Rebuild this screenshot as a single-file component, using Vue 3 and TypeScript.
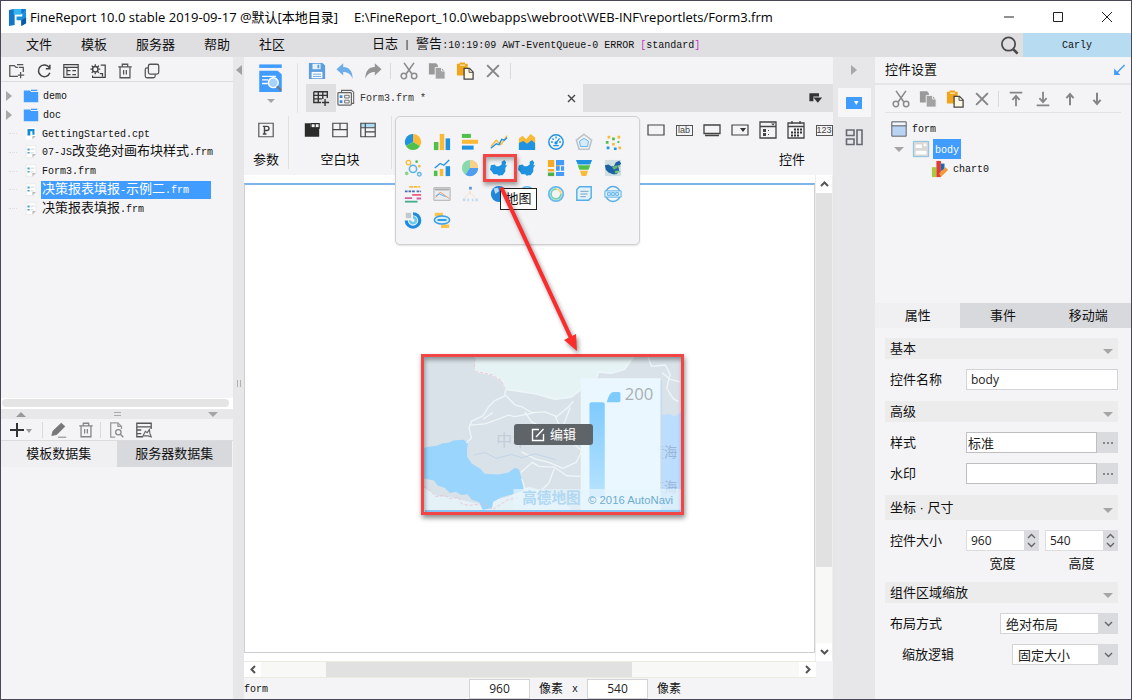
<script setup lang="ts">
import { h, ref } from 'vue'

const icons: Record<string, string> = {
  folderAdd: '<path d="M11 16H2V4h5l2 2h2M10 3h7M12 6h5v5M14 11v7M11 14.500h7" fill="none" stroke="#555" stroke-width="1.400"/>',
  refresh: '<path d="M16 6.500A6.500 6.500 0 1 0 16.500 12M16.500 3v4.500H12" fill="none" stroke="#444" stroke-width="1.700"/>',
  treeView: '<path d="M2 3h16v14H2zM2 6h16M5.500 6v9M5.500 9.500h4M5.500 14h4M11.500 9.500h4M11.500 14h4" fill="none" stroke="#444" stroke-width="1.300"/>',
  gearDoc: '<circle cx="7" cy="8" r="3" fill="none" stroke="#444" stroke-width="1.600"/><path d="M7 2.500v2M7 11.500v2M1.500 8h2M10.500 8h2M3 4l1.500 1.500M11 4L9.500 5.500M3 12l1.500-1.500M11 12l-1.500-1.500M13 3.500h5V17H4v-2M12 13h3v3" fill="none" stroke="#444" stroke-width="1.400"/>',
  trash: '<path d="M2.500 5.500h15M7 5V2.500h6V5M4.500 6v11.500h11V6M8.500 9v5M11.500 9v5" fill="none" stroke="#555" stroke-width="1.400"/>',
  copyLines: '<rect x="6" y="2.500" width="11.500" height="11" rx="2" fill="none" stroke="#555" stroke-width="1.400"/><path d="M6 6.500H4.500a2 2 0 0 0-2 2v7a2 2 0 0 0 2 2h7a2 2 0 0 0 2-2v-2" fill="none" stroke="#555" stroke-width="1.400"/>',
  save: '<path d="M1 1h15l3 3v15H1z" fill="#5b9fdf"/><path d="M5 2h9v6H5z" fill="#e8f2fc"/><path d="M10.500 3h2v4h-2z" fill="#5b9fdf"/><path d="M4 11h12v7H4z" fill="#fff"/><path d="M5.500 13.500h9M5.500 16h9" stroke="#5b9fdf"/>',
  undo: '<path d="M.5 8L8 1.500V5.500c7 0 10.500 5 10.500 13-2-5-5-7.500-10.500-7.500v4z" fill="#6eaee8"/>',
  redo: '<path d="M19.500 8L12 1.500V5.500C5 5.500 1.500 10.500 1.500 18.500c2-5 5-7.500 10.500-7.500v4z" fill="#949494"/>',
  cut: '<path d="M4.500 1l8.500 12M15.500 1L7 13" stroke="#8c8c8c" stroke-width="1.800"/><circle cx="4.300" cy="15.500" r="3" fill="none" stroke="#8c8c8c" stroke-width="1.700"/><circle cx="15.700" cy="15.500" r="3" fill="none" stroke="#8c8c8c" stroke-width="1.700"/>',
  copy: '<path d="M1 1.500h8l2 2V14H1z" fill="#999"/><path d="M8 6h7l4 4v9H8z" fill="#a2a2a2" stroke="#f4f4f6"/><path d="M15 6v4h4" fill="none" stroke="#f4f4f6"/>',
  paste: '<path d="M1 2h3V.5h6V2h3v13H1z" fill="#f0a51c"/><path d="M4.500 3.500h5.500" stroke="#fff"/><path d="M9 7h6l4 4v8H9z" fill="#fff8e4" stroke="#444" stroke-width="1.400"/><path d="M14.500 7v4.500H19" fill="none" stroke="#444"/>',
  close: '<path d="M3.500 3.500l13 13M16.500 3.500l-13 13" stroke="#858585" stroke-width="2.200"/>',
  toTop: '<path d="M3 3h14M10 18V7M6 11l4-4.500 4 4.500" fill="none" stroke="#858585" stroke-width="2"/>',
  toBottom: '<path d="M3 17h14M10 2v11M6 9l4 4.500L14 9" fill="none" stroke="#858585" stroke-width="2"/>',
  up: '<path d="M10 17V4.500M6 9l4-4.500L14 9" fill="none" stroke="#858585" stroke-width="2.200"/>',
  down: '<path d="M10 3v12.500M6 11l4 4.500 4-4.500" fill="none" stroke="#858585" stroke-width="2.200"/>',
  search: '<circle cx="9" cy="8.500" r="7" fill="none" stroke="#4a4a4a" stroke-width="1.800"/><path d="M13.500 13.500l5 5" stroke="#4a4a4a" stroke-width="2.800"/>',
  param: '<path d="M2 2.500h16v15H2z" fill="none" stroke="#555" stroke-width="1.300"/><path d="M6.500 6H11a2.300 2.300 0 0 1 0 4.600H8.500M8.300 6v8.500M6.500 14.500h4" fill="none" stroke="#444" stroke-width="1.600"/>',
  tabBlock: '<path d="M2 2.500h6.500v4.500H18v10.500H2z" fill="#2b2b2b"/><path d="M9 3h9v5H9z" fill="none" stroke="#2b2b2b" stroke-width="1.300"/><path d="M13.500 3v4" stroke="#2b2b2b" stroke-width="1.300"/>',
  absBlock: '<path d="M2 2.500h16v15H2zM2 9.500h16M10 3v6.500" fill="none" stroke="#444" stroke-width="1.300"/>',
  report: '<path d="M2 3h16v4H2z" fill="#aadcf5"/><path d="M2 2.500h16v15H2zM2 7.500h16M7 3v14M7 12h11" fill="none" stroke="#444" stroke-width="1.300"/>',
  gridAdd: '<path d="M2 3h15v7M2 3v12h8M2 7h15M2 11h9M7 3v12M12 3v8M14.500 11v8M11 15h8" fill="none" stroke="#333" stroke-width="1.500"/>',
  formTab: '<path d="M5 4V1.500h11l2.500 2V16H16" fill="none" stroke="#666" stroke-width="1.200"/><rect x="1" y="4" width="15" height="14" rx="1" fill="#f4f4f6" stroke="#666" stroke-width="1.300"/><path d="M3 7h3v3H3zM3 12.500h3v3H3z" fill="#3b8ad0"/><path d="M8.500 7h5v3h-5zM8.500 12.500h5v3h-5z" fill="none" stroke="#666"/>',
  corner: '<path d="M3 4h12v4H8v6H3z" fill="#333"/><path d="M8 9.500h11L13.500 16z" fill="#333"/>',
  button: '<path d="M2 5h16v10H2z" fill="none" stroke="#444" stroke-width="1.200"/>',
  buttonGroup: '<path d="M2 5h16v8.500H2zM3 15.500h14" fill="none" stroke="#444" stroke-width="1.300"/>',
  combo: '<path d="M2 5h16v10H2z" fill="none" stroke="#444" stroke-width="1.200"/><path d="M10 8h6l-3 4z" fill="#333"/>',
  check: '<path d="M2 2h16v16H2zM2 6.500h16" fill="none" stroke="#444" stroke-width="1.300"/><path d="M5 9h3v3H5zM5 13h3v3H5zM13 3.500h4l-2 2zM10 10h1v1h-1zM10 14h1v1h-1z" fill="#444"/>',
  calendar: '<path d="M2 3h16v15H2zM2 6.500h16M6 1v3M14 1v3" fill="none" stroke="#444" stroke-width="1.300"/><path d="M8 9.500h8M5 12.500h11M5 15.500h8" stroke="#333" stroke-width="2" stroke-dasharray="2 1"/>',
  comboStrip: '<path d="M2 4h16v12H2z" fill="#409cff"/><path d="M10 8h4.500l-2.250 4z" fill="#fff"/>',
  layout: '<path d="M2.500 3h7.500v5.500H2.500zM2.500 12h7.500v5.500H2.500zM13 3h5v14.500h-5z" fill="none" stroke="#666972" stroke-width="1.600"/>',
  pencil: '<path d="M2 16l1.500-5 9-8.500 4 3.500-9 9zM9 18h9" fill="#777" stroke="#777"/>',
  searchDoc: '<path d="M8 18H3V2h8l4 4v3M11 2v4h4" fill="none" stroke="#999" stroke-width="1.400"/><circle cx="11.500" cy="12.500" r="3" fill="none" stroke="#888" stroke-width="1.400"/><path d="M14 15l3 3" stroke="#888" stroke-width="1.500"/>',
  tableEdit: '<path d="M9 17.500H2v-15h16V9M2 6.500h16M7 10H2M7 14H2" fill="none" stroke="#555" stroke-width="1.400"/><path d="M9 16.500l2.500-5 2 1.500 2.500-3.500.5 4 1.500 4-3.500-1z" fill="none" stroke="#666" stroke-width="1.300"/>',
  pin: '<path d="M18 3L6 15" stroke="#409cff" stroke-width="2"/><path d="M3 8v9h9z" fill="#409cff"/>',
  logo: '<path d="M1 2l5-1h13l-3 5H7v12l-6 1z" fill="#1476c8"/><path d="M6 1h8v6H6z" fill="#35b5f2"/><path d="M9 9h6V6l4-5v15l-5 3v-6H9z" fill="#1c92df"/><path d="M14 13l5-3v6l-5 3z" fill="#0b5aa6"/>',
  folder: '<path d="M2 4h7l1 1.500h8V17H2z" fill="#409cff"/><path d="M10 3h7v1.500h-7z" fill="#409cff"/>',
  cpt: '<path d="M3 1h14v12l-4 5H3z" fill="#fff"/><path d="M5 3h10v8h-3V6H9v6H5z" fill="#168bd2"/><path d="M17 13h-5v5z" fill="#bbb"/>',
  frm: '<path d="M3 1h14v12l-4 5H3z" fill="#fff" stroke="#e5e5e8"/><path d="M5 5h3v3H5zM5 10h3v2H5z" fill="#4b9fcc"/><path d="M9 5h6v2H9zM9 10h5v2H9z" fill="#e3e3e3"/><path d="M17 13h-5v5z" fill="#bbb"/>',
  formNode: '<path d="M2 2h16v16H2z" fill="#b9d3f3" stroke="#555"/><path d="M3 3h14v3H3z" fill="#f5f5f5"/><path d="M2 6.500h16" stroke="#555"/>',
  bodyNode: '<path d="M1.500 1.500h17v17h-17z" fill="#d8d8d8" stroke="#7fbde0"/><path d="M4 5h7v4H4zM13 4h3v3h-3zM4 12h12v4H4z" fill="#fff"/>',
  chartNode: '<path d="M1 8h5v11H1z" fill="#a9c93f"/><path d="M6 1h5v18H6z" fill="#e03c36"/><path d="M11 4h4v8h-4z" fill="#1c68b0"/><path d="M9 15l7-7 3 3-8 8z" fill="#f29a3c"/>',
  preview: '<path d="M4 2h32v5H4z" fill="#409cff"/><path d="M4 11h26l6 5v25H4z" fill="#409cff"/><path d="M8 19h20M8 24h9M8 29h8" stroke="#fff" stroke-width="2"/><circle cx="24" cy="28" r="7" fill="#a8d2fb" stroke="#fff" stroke-width="2"/><path d="M29 33l6 6" stroke="#777" stroke-width="3"/>',
}

const china = 'M1 7l4-1 2 2 3 0 3-2 0-3 3-2 2 3-1 3 2 0-2 3 0 4-3 4-3 0-1 1-2-2-4 0-2-3-2-2z'
const charts: string[] = [
  '<path d="M10 10V1a9 9 0 0 0-7.800 13.500z" fill="#1f93df"/><path d="M10 10V1a9 9 0 0 1 7.800 13.500z" fill="#fbb938"/><path d="M10 10l7.800 4.500a9 9 0 0 1-15.600 0z" fill="#51c04b"/>',
  '<path d="M1 10h5v9H1z" fill="#51c04b"/><path d="M7.500 1h5v18h-5z" fill="#fbb938"/><path d="M14 6h5v13h-5z" fill="#1f93df"/>',
  '<path d="M1 1h10v4.500H1z" fill="#51c04b"/><path d="M1 7.500h18V12H1z" fill="#fbb938"/><path d="M1 14h13v4.500H1z" fill="#1f93df"/>',
  '<path d="M1 15l6-7 5 5 7-10" fill="none" stroke="#fbb938" stroke-width="1.500"/><path d="M1 17l6-5 3 1 3-6 3 1 3-3" fill="none" stroke="#1f93df" stroke-width="1.500"/>',
  '<path d="M1 6l4-3 4 4 5-6 5 4v14H1z" fill="#fbb938"/><path d="M1 11l5-2 4 3 5-4 4 3v8H1z" fill="#1f93df"/>',
  '<circle cx="10" cy="10" r="8" fill="none" stroke="#1f93df" stroke-width="1.600"/><path d="M4.500 10h2M13.500 10h2M10 4v2M6 6l1.500 1.500M14 6l-4 5M7 14h6" stroke="#1f93df" stroke-width="1.500"/><circle cx="10" cy="11" r="1.800" fill="#1f93df"/>',
  '<path d="M10 1.500l8.500 6.300L15.500 18h-11L1.500 7.800z" fill="none" stroke="#bfc5ca" stroke-width="1.800"/><path d="M10 6l5 3-1 6H6L5 9z" fill="#d6ebf8" stroke="#59b2e6"/>',
  '<path d="M4 3h3v3H4zM15 3h3v3h-3zM9 11h3v3H9zM16 15h3v3h-3z" fill="#fbb938"/><path d="M9 5h3v3H9zM2 9h3v3H2zM15 9h2v2h-2z" fill="#51c04b"/><path d="M3 15h3v3H3zM11 16h3v3h-3z" fill="#1f93df"/>',
  '<circle cx="5" cy="4" r="2.500" fill="none" stroke="#fbb938" stroke-width="1.500"/><circle cx="10" cy="11" r="4" fill="none" stroke="#5ab4ea" stroke-width="1.800"/><circle cx="17" cy="17" r="2" fill="none" stroke="#5ab4ea" stroke-width="1.500"/><circle cx="14" cy="3" r="1.500" fill="#51c04b"/><circle cx="3" cy="16" r="2" fill="#8bd286"/><circle cx="17" cy="8" r="1.500" fill="#fbb938"/>',
  '<path d="M1 13h4v6H1z" fill="#51c04b"/><path d="M7.500 11h4v8h-4z" fill="#fbb938"/><path d="M14 8h5v11h-5z" fill="#1f93df"/><path d="M2 10l6-5 4 2 6-6" fill="none" stroke="#1f93df" stroke-width="1.500"/>',
  '<circle cx="10" cy="10" r="9" fill="#8ad9ae"/><path d="M10 10V1a9 9 0 0 1 9 9z" fill="#fad08a"/><path d="M10 10h9a9 9 0 0 1-14 7.500z" fill="#4f9cf0"/>',
  `<path d="${china}" fill="#1f93df"/>`,
  `<path d="${china}" fill="#1f93df"/>`,
  '<path d="M1 1h7v8H1zM1 11h7v3H1zM10 7h4v5h-4z" fill="#f5ab24"/><path d="M1 15h7v4H1z" fill="#51b04b"/><path d="M10 1h9v6h-9zM10 8h4v5h-4zM15.500 8H19v5h-3.500zM10 14.500h9V19h-9z" fill="#409cff"/>',
  '<path d="M1 1h18l-2 5H3z" fill="#1f93df"/><path d="M3 7h14l-2 5H5z" fill="#51c04b"/><path d="M5.500 13h9l-2 6h-5z" fill="#fbb938"/>',
  '<path d="M1 1h18v18H1z" fill="#d0dfe2"/><path d="M1 7l4-1 3 2 3 0 2-4 4-2 2 3-3 4 1 4-3 4-4 0-5-2-3-3z" fill="#1b5fa5"/><path d="M9 9l5-2 1 3-4 2zM12 13h3v3h-3z" fill="#62b86c"/><path d="M15 8h3M14 14h4" stroke="#8fc6a0" stroke-width="2"/>',
  '<path d="M6 2h12" stroke="#fbb938" stroke-width="2" stroke-dasharray="4 1"/><path d="M1 7h11M14 7h5" stroke="#476dab" stroke-width="2" stroke-dasharray="3 1"/><path d="M9 11h10" stroke="#ed6284" stroke-width="2"/><path d="M1 14.500h8M14 15h5" stroke="#d35ea0" stroke-width="2"/><path d="M1 18.500h14" stroke="#48aa8d" stroke-width="2"/>',
  '<path d="M1 3h18v14H1z" fill="#e9edf0" stroke="#aaa"/><path d="M2 5h16" stroke="#aaa" stroke-width="2"/><path d="M3 14l5-6 10 7" fill="none" stroke="#ed8f60"/><path d="M3 12l4-2 7 3" fill="none" stroke="#55afea"/>',
  '<path d="M10 4v5M10 9l-6 5M10 9l6 5" fill="none" stroke="#f3d9ae" stroke-dasharray="2 1"/><path d="M9 2h3v3H9z" fill="#5b95d8"/><path d="M2 15h3v3H2zM7 15h2v3H7zM12 15h2v3h-2zM16 15h3v3h-3z" fill="#c5dcf0"/>',
  '<circle cx="10" cy="10" r="9" fill="#1f86dc"/><path d="M4 4l5-1 1 4-4 3zM12 7l5 1-2 6-3-2z" fill="#b9dcf6"/>',
  '<circle cx="10" cy="10" r="8" fill="none" stroke="#63b5e9" stroke-width="1.800"/>',
  '<circle cx="10" cy="10" r="8" fill="none" stroke="#65b9ec" stroke-width="2"/><path d="M10 4.500A5.500 5.500 0 1 0 15.500 10" fill="none" stroke="#74d3b2" stroke-width="2"/><path d="M10 4.500a5.500 5.500 0 0 1 5.500 5.500" fill="none" stroke="#f8d67c" stroke-width="2"/>',
  '<path d="M5 2h13v12l-3 3H2V5z" fill="#e2f2fc" stroke="#55afe6" stroke-width="1.600"/><path d="M6 7h9M6 10h8M6 13h6" stroke="#7199b5"/>',
  '<circle cx="10" cy="10" r="8.300" fill="none" stroke="#55afe6" stroke-width="1.700"/><path d="M1 6.500h18v7H1z" fill="#dceffb" stroke="#55afe6"/><path d="M4 8.500h3v3H4zM8.500 8.500h3v3h-3zM13 8.500h3v3h-3z" fill="none" stroke="#55afe6"/>',
  '<path d="M2 2h6v6H2z" fill="#c4c8cb"/><path d="M10 3a7.500 7.500 0 1 1-7.500 7.500" fill="none" stroke="#1f8be0" stroke-width="3.500"/><path d="M10 7a3.300 3.300 0 1 1-3.300 3.300" fill="none" stroke="#6ccbe8" stroke-width="3"/>',
  '<path d="M2 2h9v4H2zM9 15h9v4H9z" fill="#fbc34b"/><ellipse cx="10" cy="10" rx="8.500" ry="4.500" fill="#d6edfb" stroke="#3a9fe2" stroke-width="1.700"/><path d="M5 10h10" stroke="#1f93df" stroke-width="2"/>',
]

const Ic = (p: { n: string; s?: number }) =>
  h('svg', { class: 'ic', viewBox: p.n === 'preview' ? '0 0 40 44' : '0 0 20 20', width: p.s ?? 18, height: p.s ?? 18, 'aria-hidden': 'true', innerHTML: icons[p.n] })
Ic.props = ['n', 's']

/* Mixed text: Latin runs use the narrow monospace face, CJK runs the sans face. */
const Tx = (p: { t: string }) =>
  h('span', { class: 'tx' }, (p.t.match(/[\x00-\x7f]+|[^\x00-\x7f]+/g) ?? []).map(r => (/^[\x00-\x7f]/.test(r) ? h('span', { class: 'lat' }, r) : r)))
Tx.props = ['t']

const menus = ['文件', '模板', '服务器', '帮助', '社区']
const files = [
  { name: 'demo', icon: 'folder', dir: true },
  { name: 'doc', icon: 'folder', dir: true },
  { name: 'GettingStarted.cpt', icon: 'cpt', dir: false },
  { name: '07-JS改变绝对画布块样式.frm', icon: 'frm', dir: false },
  { name: 'Form3.frm', icon: 'frm', dir: false },
  { name: '决策报表填报-示例二.frm', icon: 'frm', dir: false },
  { name: '决策报表填报.frm', icon: 'frm', dir: false },
]
const selected = ref(5)
const widgets = ['button', 'label', 'buttonGroup', 'combo', 'check', 'calendar', 'number']
const propTabs = ['属性', '事件', '移动端']
const propTab = ref(0)
const dataTabs = ['模板数据集', '服务器数据集']
const name = ref('body')
const look = ref('标准')
const mark = ref('')
const w = ref('960')
const ht = ref('540')
const sizes = [
  { label: '宽度', model: w },
  { label: '高度', model: ht },
]
</script>

<template>
  <div class="win">
    <header class="title">
      <Ic n="logo" :s="19" />
      <span>FineReport 10.0 stable 2019-09-17 @默认[本地目录]</span>
      <span class="path">E:\FineReport_10.0\webapps\webroot\WEB-INF\reportlets/Form3.frm</span>
      <div class="winbtns">
        <button aria-label="最小化"><svg width="12" height="12"><path d="M1 6h10" /></svg></button>
        <button aria-label="最大化"><svg width="12" height="12"><path d="M1.500 1.500h9v9h-9z" /></svg></button>
        <button aria-label="关闭"><svg width="12" height="12"><path d="M1 1l10 10M11 1L1 11" /></svg></button>
      </div>
    </header>
    <nav class="menu">
      <button v-for="m in menus" :key="m">{{ m }}</button>
      <p class="log"><Tx t="日志 | 警告:10:19:09 AWT-EventQueue-0 ERROR " /><Tx class="pink" t="[" /><Tx t="standard" /><Tx class="pink" t="]" /></p>
      <button class="find" aria-label="搜索"><Ic n="search" :s="19" /></button>
      <button class="user"><Tx t="Carly" /></button>
    </nav>

    <div class="work">
      <aside class="left">
        <div class="bar ltools">
          <button v-for="i in ['folderAdd','refresh','treeView','gearDoc','trash','copyLines']" :key="i" class="ib" :aria-label="i"><Ic :n="i" /></button>
        </div>
        <div class="treebox">
          <ul class="tree">
            <li v-for="(f, i) in files" :key="f.name">
              <span class="tw"><i v-if="f.dir" class="tri te"></i><i v-else class="dash"></i></span>
              <Ic :n="f.icon" :s="f.dir ? 18 : 14" />
              <button :class="['file', { on: selected === i }]" @click="selected = i"><Tx :t="f.name" /></button>
            </li>
          </ul>
        </div>
        <div class="lscroll"><div></div></div>
        <div class="hsplit"><i class="tri tn"></i><span class="grip"></span><i class="tri ts"></i></div>
        <div class="bar dtools">
          <button class="add" aria-label="新增"><svg width="24" height="16"><path d="M1 8h14M8 1v14" stroke="#333" stroke-width="2" /><path d="M17 7h6l-3 4z" fill="#999" /></svg></button>
          <span class="sep"></span>
          <button class="ib" aria-label="编辑"><Ic n="pencil" /></button>
          <button class="ib dim" aria-label="删除"><Ic n="trash" /></button>
          <span class="sep"></span>
          <button class="ib" aria-label="预览"><Ic n="searchDoc" /></button>
          <button class="ib" aria-label="管理"><Ic n="tableEdit" /></button>
        </div>
        <div class="tabs dtabs"><button v-for="(t, i) in dataTabs" :key="t" :class="{ on: i === 0 }">{{ t }}</button></div>
      </aside>

      <div class="vsplit"><i class="tri tw-w"></i><span class="vgrip"></span></div>

      <main class="center">
        <div class="head">
          <button class="preview" aria-label="预览"><Ic n="preview" :s="31" /><i class="tri ts"></i></button>
          <div class="headr">
            <div class="ctools">
              <button v-for="i in ['save','undo','redo']" :key="i" class="ib c" :aria-label="i"><Ic :n="i" /></button>
              <span class="sep"></span>
              <button v-for="i in ['cut','copy','paste','close']" :key="i" class="ib c" :aria-label="i"><Ic :n="i" /></button>
              <span class="sep"></span>
            </div>
            <div class="doctabs">
              <button class="newtab" aria-label="新建"><Ic n="gridAdd" /></button>
              <div class="doctab"><Ic n="formTab" /><Tx t="Form3.frm *" /><button aria-label="关闭标签"><svg width="9" height="9"><path d="M1 1l7 7M8 1L1 8" stroke="#444" stroke-width="1.400" /></svg></button></div>
              <button class="corner" aria-label="标签列表"><Ic n="corner" :s="16" /></button>
            </div>
          </div>
        </div>
        <div class="ribbon">
          <div class="grp p"><div class="gi"><button class="ib c" aria-label="参数"><Ic n="param" /></button></div><span>参数</span></div>
          <div class="grp b"><div class="gi"><button v-for="i in ['tabBlock','absBlock','report']" :key="i" class="ib c" :aria-label="i"><Ic :n="i" /></button></div><span>空白块</span></div>
          <div class="gap"></div>
          <div class="grp wd">
            <div class="inner">
              <div class="gi">
                <button v-for="i in widgets" :key="i" class="ib c" :aria-label="i">
                  <span v-if="i === 'label'" class="wtxt">lab</span>
                  <span v-else-if="i === 'number'" class="wtxt">123</span>
                  <Ic v-else :n="i" :s="20" />
                </button>
              </div>
              <span>控件</span>
            </div>
          </div>
        </div>
        <div class="stage">
          <div class="canvas">
            <div class="chart">
              <svg viewBox="27 35 772 466" preserveAspectRatio="none">
                <defs>
                  <linearGradient id="lg" x1="0" y1="0" x2="0" y2="1"><stop offset="0" stop-color="#7fcbfd" /><stop offset="1" stop-color="#b8e3fe" /></linearGradient>
                </defs>
                <path d="M27 35h772v466H27z" fill="#d8e2e8" />
                <path d="M178 35L180 78 232 88 262 106 272 132 310 138 362 146 420 162 470 156 500 132 545 98 552 80 590 84 630 72 660 35z" fill="#e6f3f5" />
                <path d="M27 428l40 25 50 5 35 10 40 8 90-22 60-30 90 30 45 47H27z" fill="#e4f2f8" />
                <path d="M799 202l-22 12-12-8-25 4 2 60-4 231h61z" fill="#bcddfe" />
                <path d="M27 308l18-4 20-2 18-8 18-1 14-7 30-2 14 8-3 22 1 22 14 20 26 16 12 14 42 2 30-6 20-14 12 6 4 18 6 10 2 34-28 10-40 12-22 12-4 20-28 4-10-22-22-8-14-16-18 2-16-10-18 4-16-16-20-6-12-16-30-6z" fill="#99d5fd" />
                <g fill="none" stroke="#eff6f8" stroke-width="4" stroke-linejoin="round">
                  <path d="M180 78l52 10 30 18 10 26 38 6 52 8 58 16 50-6 30-24 45-34 7-18 38 4 40-12 20-30" />
                  <path d="M272 132l-2 20-30 14-20 20-16 26-34 16-8 20 8 30-16 16" />
                  <path d="M272 150l30 30 22 6 26 16 40-2 36 14 32-26 18-20M164 240l46-4 40-14 30-12 20 4 60-12M204 222l30-20M330 200l20 30 40 20 40 16 20-36 16-44M420 210l22 50 34 36 24 20M320 320l42 22 40 10 42 18 40-18 16-32M318 382l34-30 20 12 46 2 38 26 42 2M320 400l10 30 42 14 30-30 16-42M700 35l10 28 42-4 14 28-10 42 20 32 16 8M742 82l24 20 30 8" />
                </g>
                <path d="M176 330l34-8 34 18 46-12 32 10 38-12 64 18" fill="none" stroke="#c2d5e8" stroke-width="3" />
                <path d="M27 425l20 12 14 18 28-4 16 10 26-4 10 20 20 4 40-4 34 16 42-28 38-8M180 40l-2 30M180 78l52 10 28 18 12 26" fill="none" stroke="#f0b7c7" stroke-width="2" stroke-dasharray="10 5" />
                <text x="244" y="302" class="mapname">中华</text>
                <text x="708" y="337" class="sea">黄海</text><text x="708" y="440" class="sea">东海</text>
                <path d="M498 99h240v402H498z" fill="#eaf7fe" />
                <path d="M740 104v350" stroke="#c8dceb" stroke-width="5" />
                <path d="M524 177q0-6 6-6h34q6 0 6 6v280h-46z" fill="url(#lg)" />
                <path d="M576 171q8-31 20-31h16q5 0 5 5v21q0 5-5 5z" fill="#7fcbfd" />
                <path d="M296 432h503v62H296z" fill="#e5f3fc" opacity=".7" />
                <text x="630" y="165" class="num">200</text>
                <text x="322" y="473" class="gaode">高德地图</text>
                <text x="520" y="477" class="auto">© 2016 AutoNavi</text>
                <path d="M30 498h766" stroke="#8bc4f5" stroke-width="6" />
              </svg>
              <button class="edit"><svg width="14" height="14"><path d="M8 1.500H1.500v11h11V6M5 9l7.500-8" fill="none" stroke="#fff" stroke-width="1.400" /></svg>编辑</button>
            </div>
          </div>
          <div class="vs"><button aria-label="向上"><svg width="9" height="6"><path d="M1 5l3.500-3.500L8 5" /></svg></button><div></div><button aria-label="向下"><svg width="9" height="6"><path d="M1 1l3.500 3.500L8 1" /></svg></button></div>
        </div>
        <div class="hs"><button aria-label="向左"><svg width="6" height="9"><path d="M5 1L1.500 4.500 5 8" /></svg></button><div class="track"><div></div></div><button aria-label="向右"><svg width="6" height="9"><path d="M1 1l3.500 3.500L1 8" /></svg></button></div>
        <footer class="status">
          <Tx t="form" />
          <div class="dims"><input v-model="w" aria-label="宽度像素" /><span>像素</span><Tx t="x" /><input v-model="ht" aria-label="高度像素" /><span>像素</span></div>
        </footer>

        <div class="pop">
          <button v-for="(c, i) in charts" :key="i" :class="{ hot: i === 11 }" :aria-label="'图表' + (i + 1)"><svg viewBox="0 0 20 20" width="18" height="18" v-html="c"></svg></button>
        </div>
        <div class="tip">地图</div>
        <svg class="arrow" width="100" height="180"><path d="M16 9L85 158" stroke="#fb2c2c" stroke-width="4" stroke-linecap="round" /><path d="M91 171L78 160l12-6z" fill="#fb2c2c" /></svg>
      </main>

      <div class="strip">
        <i class="tri te"></i>
        <button class="on" aria-label="控件设置"><Ic n="comboStrip" :s="20" /></button>
        <button aria-label="组件"><Ic n="layout" :s="20" /></button>
      </div>

      <aside class="side">
        <div class="rhead"><h2>控件设置</h2><button aria-label="固定"><Ic n="pin" :s="14" /></button></div>
        <div class="rtools">
          <button v-for="i in ['cut','copy','paste','close']" :key="i" class="ib" :aria-label="i"><Ic :n="i" /></button>
          <span class="sep"></span>
          <button v-for="i in ['toTop','toBottom','up','down']" :key="i" class="ib" :aria-label="i"><Ic :n="i" /></button>
        </div>
        <ul class="nodes">
          <li><Ic n="formNode" :s="18" /><Tx t="form" /></li>
          <li class="l1"><i class="tri ts"></i><Ic n="bodyNode" :s="18" /><span class="cur"><Tx t="body" /></span></li>
          <li class="l2"><Ic n="chartNode" :s="18" /><Tx t="chart0" /></li>
        </ul>
        <div class="tabs ptabs"><button v-for="(t, i) in propTabs" :key="t" :class="{ on: propTab === i }" @click="propTab = i">{{ t }}</button></div>
        <form class="props" @submit.prevent>
          <h3>基本<i class="tri ts"></i></h3>
          <div class="rows"><div class="row"><label for="nm">控件名称</label><input id="nm" v-model="name" class="wide seg" /></div></div>
          <h3>高级<i class="tri ts"></i></h3>
          <div class="rows">
            <div class="row"><label for="st">样式</label><div class="wide pick"><input id="st" v-model="look" /><button aria-label="选择样式"><i></i><i></i><i></i></button></div></div>
            <div class="row"><label for="wm">水印</label><div class="wide pick"><input id="wm" v-model="mark" /><button aria-label="选择水印"><i></i><i></i><i></i></button></div></div>
          </div>
          <h3 class="tall">坐标 · 尺寸<i class="tri ts"></i></h3>
          <div class="rows size">
            <div class="row">
              <span>控件大小</span>
              <div class="wide two">
                <div v-for="s in sizes" :key="s.label" class="spin">
                  <input v-model="s.model.value" :aria-label="s.label" />
                  <span class="steps"><button aria-label="增加"><svg width="9" height="6"><path d="M1 5l3.500-3.500L8 5" /></svg></button><button aria-label="减少"><svg width="9" height="6"><path d="M1 1l3.500 3.500L8 1" /></svg></button></span>
                </div>
              </div>
            </div>
            <div class="row caps"><div class="wide two"><span v-for="s in sizes" :key="s.label">{{ s.label }}</span></div></div>
          </div>
          <h3>组件区域缩放<i class="tri ts"></i></h3>
          <div class="rows">
            <div class="row"><label for="ly">布局方式</label><div class="sel"><select id="ly"><option>绝对布局</option><option>自适应布局</option></select><span><svg width="9" height="6"><path d="M1 1l3.500 3.500L8 1" /></svg></span></div></div>
            <div class="row sub"><label for="sc">缩放逻辑</label><div class="sel s2"><select id="sc"><option>固定大小</option><option>适应区域</option></select><span><svg width="9" height="6"><path d="M1 1l3.500 3.500L8 1" /></svg></span></div></div>
          </div>
        </form>
      </aside>
    </div>
  </div>
</template>

<style>
html, body { margin: 0; background: #f4f4f6; }
.ic { display: block; flex: none; }
.tx { white-space: pre; }
.tx .lat { font-family: "Liberation Mono", monospace; font-size: 10px; }
</style>

<style scoped>
* { box-sizing: border-box; }
.win { height: 100vh; min-height: 690px; display: flex; flex-direction: column; border: 1px solid #4a4759; background: #f4f4f6; color: #111; font: 13px/18px "Liberation Sans", "Noto Sans CJK SC", sans-serif; overflow: hidden; }
button { padding: 0; border: 0; background: none; font: inherit; color: inherit; display: flex; align-items: center; justify-content: center; flex: none; }
input, select { font: 12px/18px "Open Sans", "Noto Sans CJK SC", sans-serif; color: #222; background: #fff; border: 1px solid #d4d4d6; border-radius: 0; padding: 0 4px; min-width: 0; outline: 0; }
ul { list-style: none; margin: 0; padding: 0; }
h2, h3, p { margin: 0; font: inherit; }

.tri { display: block; width: 0; height: 0; border: 5px solid transparent; flex: none; }
.te { border-left: 6px solid #a8a8a8; border-right: 0; }
.tw-w { border-right: 6px solid #a0a0a0; border-left: 0; }
.ts { border-top: 5px solid #a5a5a5; border-bottom: 0; }
.tn { border-bottom: 5px solid #999; border-top: 0; }
.sep { width: 1px; height: 16px; background: #dadadc; flex: none; }

.title { height: 32px; flex: none; display: flex; align-items: center; padding-left: 7px; background: #fff; color: #000; font: 13px/20px "Open Sans", "Noto Sans CJK SC", sans-serif; white-space: pre; }
.title > span { margin-left: 3px; }
.title > .path { margin-left: 16px; }
.winbtns { margin-left: auto; display: flex; }
.winbtns button { width: 49px; height: 30px; }
.winbtns path { fill: none; stroke: #222; stroke-width: 1; }

.menu { height: 24px; flex: none; display: flex; align-items: center; padding-left: 25px; background: #dfdfe1; }
.menu > button { margin-right: 29px; height: 24px; }
.log { margin-left: 58px; white-space: nowrap; }
.pink { color: #c535c5; }
.menu > .find { margin: 0 4px 0 auto; }
.menu > .user { width: 108px; margin: 0; background: #b7dcf2; }

.work { flex: 1; min-height: 0; display: flex; }
.left { width: 232px; flex: none; display: flex; flex-direction: column; }
.bar { display: flex; align-items: center; flex: none; border-bottom: 1px solid #dcdcde; }
.ltools { height: 25px; padding: 3px 0 0 2px; }
.ib { width: 27px; height: 20px; }
.ib.c { width: 28px; }
.treebox { flex: 0 0 316px; padding: 5px 0 0 5px; }
.tree { height: 131px; display: grid; grid-auto-rows: 1fr; }
.tree li { display: flex; align-items: center; }
.tw { width: 15px; margin-right: 1px; }
.tree li .ic { margin: 0 2px 0 0; }
.tree .file { height: 18px; justify-content: flex-start; padding: 0 1px; white-space: nowrap; }
.tree li:nth-child(n + 3) .ic { margin: 0 3px 0 2px; }
.tree .file.on { width: 170px; background: #409cff; color: #fff; }
.dash { display: block; width: 8px; margin-left: 3px; border-top: 1px dotted #ddd; }
.lscroll { height: 11px; flex: none; background: #fff; padding: 1px 4px 2px 1px; }
.lscroll div { height: 8px; border-radius: 4px; background: #e4e4e4; }
.hsplit { height: 10px; flex: none; background: #e8e8ea; display: flex; align-items: center; justify-content: space-between; padding: 0 15px; }
.grip { width: 7px; height: 4px; border: solid #aaa; border-width: 1px 0; }
.dtools { height: 22px; }
.dtools .add { width: 40px; }
.dtools .sep { margin: 0 2px 0 1px; }
.dim { opacity: .7; }
.tabs { display: flex; flex: none; }
.tabs button { flex: 1; background: #d8d9dd; }
.tabs button.on { background: #f0f0f2; }
.dtabs { height: 26px; padding-right: 1px; }

.vsplit { width: 11px; flex: none; background: #e7e7e9; display: flex; flex-direction: column; align-items: center; padding-top: 8px; }
.vgrip { margin-top: 305px; width: 4px; height: 7px; border: solid #b0b0b0; border-width: 0 1px; }

.center { flex: 1; min-width: 0; display: flex; flex-direction: column; position: relative; }
.head { height: 55px; flex: none; display: flex; }
.preview { width: 54px; height: 50px; margin-top: 6px; flex-direction: column; justify-content: flex-start; gap: 5px; border-right: 1px solid #e2e2e4; }
.preview .tri { border-width: 4px 4px 0; }
.headr { flex: 1; min-width: 0; margin-left: 8px; }
.ctools { height: 27px; display: flex; align-items: center; margin-left: -3px; }
.ctools .sep { margin: 0 4px 0 3px; }
.doctabs { height: 28px; display: flex; background: #dfdfe1; }
.newtab { width: 30px; }
.doctab { width: 247px; display: flex; align-items: center; padding: 0 7px 0 1px; background: #f4f4f6; color: #333; }
.doctab .tx { margin: 0 auto 0 5px; }
.corner { margin-left: auto; width: 36px; }
.ribbon { height: 63px; flex: none; display: flex; padding-top: 4px; }
.grp { height: 53px; text-align: center; border-right: 1px solid #e2e0da; overflow: hidden; flex: none; }
.grp span { display: block; }
.gi { height: 28px; display: flex; justify-content: center; align-items: center; margin-bottom: 7px; }
.grp.p { width: 45px; }
.grp.b { width: 103px; }
.gap { width: 250px; flex: none; }
.grp.wd { flex: 1; min-width: 0; border: 0; }
.inner { width: 300px; }
.inner .gi { justify-content: flex-start; }
.grp .wtxt { width: 17px; height: 11px; border: 1px solid #555; font: 9px/9px "Liberation Sans", sans-serif; color: #444; }

.stage { flex: 1; min-height: 0; display: flex; background: #fff; }
.canvas { flex: 1; min-width: 0; margin: 8px 0; border: 1px solid #cfcfd1; border-top: 2px solid #7eb4e8; position: relative; }
.vs { width: 18px; flex: none; display: flex; flex-direction: column; background: #f8f8f6; border: solid #efeee8; border-width: 0 1px; }
.vs button { height: 18px; background: #fff; }
.vs div { flex: 1; margin-bottom: 76px; background: #e1e1e1; }
.hs { height: 17px; flex: none; display: flex; margin-right: 17px; border: solid #ecebe2; border-width: 1px 0; background: #fff; }
.hs button { width: 17px; }
.track { flex: 1; background: #f8f8f6; }
.track div { width: 57%; height: 100%; margin-left: 12%; background: #e1e1e1; }
.vs path, .hs path { fill: none; stroke: #555; stroke-width: 2; }
.status { height: 21px; flex: none; display: flex; align-items: center; }
.dims { display: flex; align-items: center; margin-left: 201px; }
.dims input { width: 61px; height: 20px; text-align: center; }
.dims > span { margin-left: 9px; font-size: 12px; }
.dims .tx { margin-right: 9px; }

.pop { position: absolute; left: 151px; top: 59px; width: 245px; height: 129px; padding: 12px 12px 0 3px; border: 1px solid #d0d0d2; border-radius: 5px; background: #f4f4f6; display: grid; grid-template-columns: repeat(8, 1fr); grid-auto-rows: 26px; box-shadow: 0 1px 2px rgba(0, 0, 0, .12); }
.pop button { position: relative; }
.pop .hot::after { content: ""; position: absolute; inset: -1px -4px -1px -2px; border: 3px solid #f24545; box-shadow: 1px 3px 4px rgba(0, 0, 0, .35), inset 1px 3px 4px rgba(0, 0, 0, .3); z-index: 1; }
.tip { position: absolute; left: 256px; top: 131px; width: 37px; height: 22px; border: 1px solid #222; background: #fff; text-align: center; line-height: 20px; }
.arrow { position: absolute; left: 242px; top: 123px; filter: drop-shadow(2px 3px 2px rgba(0, 0, 0, .4)); pointer-events: none; }

.chart { position: absolute; left: 176px; top: 169px; width: 263px; height: 161px; border: 3px solid #f24545; box-shadow: 1px 3px 5px rgba(0, 0, 0, .45); }
.chart::after { content: ""; position: absolute; inset: 0; box-shadow: inset 1px 3px 4px rgba(0, 0, 0, .35); pointer-events: none; }
.chart > svg { display: block; width: 100%; height: 100%; }
.mapname { font-size: 48px; fill: #c4ced8; }
.sea { font-size: 40px; fill: #9bb5d6; }
.num { font-size: 50px; font-family: "Open Sans", sans-serif; fill: #a9b0b5; }
.gaode { font-size: 44px; font-weight: 700; fill: #b0d8f3; }
.auto { font-size: 34px; fill: #6caed0; }
.edit { position: absolute; left: 90px; top: 67px; width: 79px; height: 21px; gap: 5px; border-radius: 3px; background: #5f6468; color: #fff; }

.strip { width: 42px; flex: none; background: #e7e7e9; display: flex; flex-direction: column; align-items: center; padding-top: 8px; }
.strip button { width: 33px; height: 29px; }
.strip .on { background: #f6f6f8; margin: 13px 0 5px; }

.side { width: 256px; flex: none; display: flex; flex-direction: column; }
.rhead { height: 28px; flex: none; display: flex; align-items: center; justify-content: space-between; padding: 0 5px 0 10px; border-bottom: 2px solid #e6e6e8; }
.rtools { height: 28px; flex: none; display: flex; align-items: center; margin: 0 10px; padding-left: 2px; border-bottom: 1px solid #e2e2e4; }
.rtools .sep { margin: 0 3px; }
.nodes { flex: 0 0 190px; padding: 6px 0 0 15px; }
.nodes li { height: 20px; display: flex; align-items: center; gap: 4px; }
.l1 { padding-left: 4px; }
.nodes .l1 { gap: 0; }
.l1 .ic { margin: 0 4px 0 8px; }
.cur { height: 20px; padding: 0 2px; margin-left: -1px; line-height: 20px; background: #409cff; color: #fff; }
.l2 { padding-left: 41px; }
.ptabs { height: 25px; }
.props { padding: 10px 13px 0 10px; }
h3 { height: 21px; padding: 0 5px; display: flex; align-items: center; justify-content: space-between; background: #ececed; }
h3 .tri { margin-top: 5px; }
h3.tall { height: 25px; }
.rows { padding: 5px 0 6px 5px; }
.rows.size { padding-bottom: 10px; }
.row { height: 31px; display: flex; align-items: center; justify-content: space-between; }
.wide { width: 152px; }
.seg, .sel, .pick, .spin { height: 21px; }
.pick { display: flex; }
.pick input { flex: 1; font-size: 13px; padding: 0 1px; border-color: #bfbfc1; }
.pick button { width: 21px; gap: 2px; background: #dadbdf; }
.pick button i { width: 2px; height: 2px; background: #888; }
.two { display: grid; grid-template-columns: 1fr 1fr; gap: 6px; }
.spin { display: flex; border: 1px solid #dcdcde; background: #fff; }
.spin input { flex: 1; width: 20px; border: 0; padding: 0 4px; }
.steps { width: 14px; display: grid; background: #dadbdf; }
.steps button { min-height: 0; }
.steps path, .sel path { fill: none; stroke: #666; stroke-width: 1.4; }
.row.caps { height: 16px; justify-content: flex-end; text-align: center; }
.sel { width: 118px; display: flex; position: relative; }
.s2 { width: 106px; }
.sel select { flex: 1; appearance: none; font-size: 13px; padding: 0 5px; }
.sel > span { position: absolute; right: 0; top: 0; width: 20px; height: 100%; display: flex; align-items: center; justify-content: center; background: #dadbdf; pointer-events: none; }
.row.sub { padding-left: 12px; }
</style>
